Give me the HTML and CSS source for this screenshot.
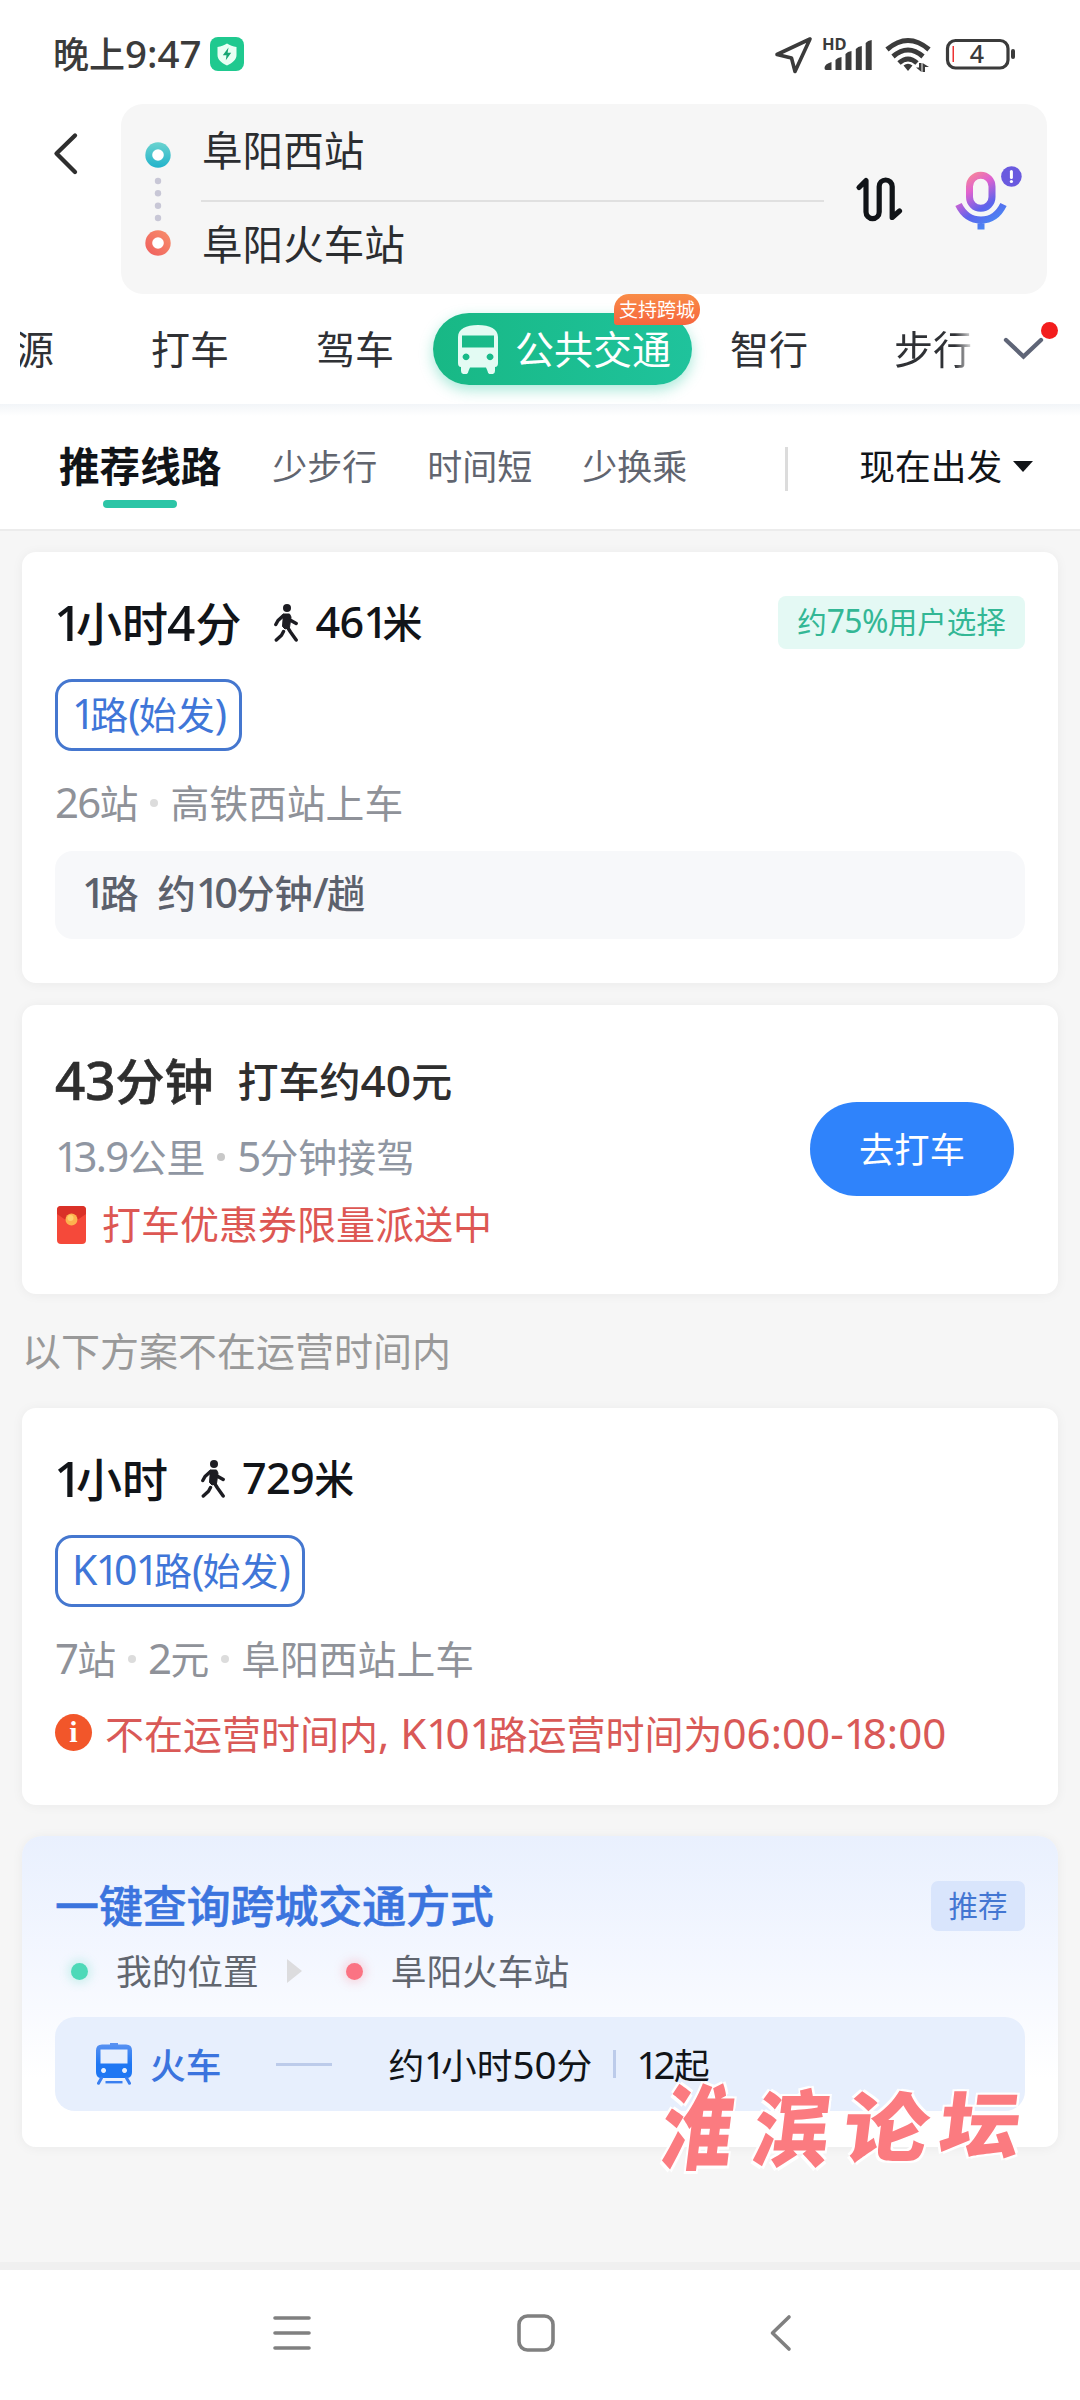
FILE: index.html
```html
<!DOCTYPE html>
<html lang="zh-CN">
<head>
<meta charset="utf-8">
<title>公共交通路线</title>
<link rel="stylesheet" href="styles.css">
</head>
<body>
<svg class="defs" width="0" height="0">
  <defs>
    <symbol id="walker" viewBox="0 0 24 38">
      <circle cx="13" cy="4" r="4"/>
      <path d="M9 10h6.500l1.500 3-1.500 10.500-4.500 1.500-2.500-2.500.5-6.500z" stroke="currentColor" stroke-width="1" stroke-linejoin="round"/>
      <path d="M9.500 11.500 4 16.500 1.800 20.500M16.500 16.200l5.700 3.300M13 22.500l3.500 5.500 5.700 8M9.500 27.500 7.500 31.200 2.300 36" fill="none" stroke="currentColor" stroke-width="3.400" stroke-linecap="round" stroke-linejoin="round"/>
    </symbol>
  </defs>
</svg>
<div class="screen">
  <header class="top">
    <div class="status">
      <span class="clock">晚上<span class="n">9:47</span></span>
      <svg class="shield" width="34" height="34" viewBox="0 0 34 34"><rect width="34" height="34" rx="8" fill="#1fc98f"/><path d="M17 6.500c3 2 6 3 9.500 3.500v8c0 4.500-4 8-9.500 10.500C11.500 26 7.500 22.500 7.500 18v-8c3.500-.5 6.500-1.500 9.500-3.500z" fill="#e9fff4"/><path d="M18.500 10.500 12.800 18.200h3.700l-.7 5 5.400-7.400h-3.600z" fill="#17a673"/></svg>
      <svg class="status-icons" width="244" height="60" viewBox="773 25 244 60">
        <g fill="none" stroke="#3b3b3b" stroke-width="3.600" stroke-linejoin="round">
          <path d="M810 39 777 54.500 791.500 58 795 71.500z"/>
          <rect x="947.500" y="40.500" width="60.500" height="27.500" rx="8" stroke-width="3.200"/>
          <path d="M887 49.500Q908 31.500 929 49.500M893 56.500Q908 43.500 923 56.500M899 63Q908 55 917 63" stroke-width="5" stroke-linejoin="miter"/>
        </g>
        <g fill="#3b3b3b">
          <path d="M824.500 68q0-4 7-6v8h-5.500q-1.500 0-1.500-2zM835.500 60q2-2.500 6-3v13h-6zM845.500 54q2-2.500 6-3v19h-6zM855.800 49q2-2.500 6-3v24h-6zM865.700 43q2-2.500 6-3v30h-6z"/>
          <path d="M903.500 65.500q4.500-3.500 9 0l-4.500 5.500z"/>
          <path d="M919 63h2.500v9l-5.500-4.500h3zM925 72h-2.500v-9l6.500 4h-4z"/>
          <rect x="1011" y="49" width="4" height="10" rx="2"/>
        </g>
        <rect x="952.500" y="46" width="1.500" height="16" fill="#e33"/>
        <text x="822" y="50" class="hd">HD</text>
        <text x="977" y="63" class="level">4</text>
      </svg>
    </div>
    <div class="search">
      <svg class="back" width="30" height="48" viewBox="50 130 30 48"><path d="M76 135.500 57.500 153.500 76 172" fill="none" stroke="#2e2e2e" stroke-width="4.300" stroke-linecap="round" stroke-linejoin="round"/></svg>
      <div class="endpoints">
        <svg class="track" width="30" height="120" viewBox="143.500 140 30 120">
          <defs><linearGradient id="cy" x1="0" y1="0" x2="0" y2="1"><stop offset="0" stop-color="#6bd3cf"/><stop offset="1" stop-color="#22b3cb"/></linearGradient><linearGradient id="rd" x1="1" y1="0" x2="0" y2="1"><stop offset="0" stop-color="#f8906c"/><stop offset="1" stop-color="#ef5d5d"/></linearGradient></defs>
          <circle cx="158.500" cy="155" r="12.700" fill="url(#cy)"/><circle cx="158.500" cy="155" r="5.800" fill="#fff"/>
          <g fill="#c8c7d6"><circle cx="158.500" cy="181" r="3.200"/><circle cx="158.500" cy="193.300" r="3.200"/><circle cx="158.500" cy="205.700" r="3.200"/><circle cx="158.500" cy="218" r="3.200"/></g>
          <circle cx="158.500" cy="243" r="12.700" fill="url(#rd)"/><circle cx="158.500" cy="243" r="5.800" fill="#fff"/>
        </svg>
        <div class="places">
          <div class="place">阜阳西站</div>
          <div class="place">阜阳火车站</div>
        </div>
        <svg class="swap" width="50" height="50" viewBox="855 174 50 50"><path d="M859 187.500 866 180.500V212a6.600 6.600 0 0 0 13.200 0V186.500a6.500 6.500 0 0 1 13 0V217.500L899.500 211" fill="none" stroke="#111418" stroke-width="5.200" stroke-linecap="round" stroke-linejoin="round"/></svg>
        <svg class="mic" width="68" height="68" viewBox="955 164 68 68">
          <defs><linearGradient id="mg" gradientUnits="userSpaceOnUse" x1="962" y1="172" x2="994" y2="222"><stop offset="0" stop-color="#ff9483"/><stop offset=".35" stop-color="#e062cf"/><stop offset=".7" stop-color="#5d63ec"/><stop offset="1" stop-color="#4a86f3"/></linearGradient></defs>
          <g fill="none" stroke="url(#mg)" stroke-width="7"><rect x="969.500" y="175.200" width="22.500" height="33" rx="11.200"/><path d="M958.500 204.500Q966 220 981 220T1003.500 204.500M981 220v9.500"/></g>
          <circle cx="1011.400" cy="176.500" r="10.300" fill="#6a5adf"/><path d="M1011.400 171.500v6" stroke="#fff" stroke-width="3" stroke-linecap="round"/><circle cx="1011.400" cy="181.500" r="1.600" fill="#fff"/>
        </svg>
      </div>
    </div>
    <nav class="modes">
      <div class="modes-strip">
        <span class="mode cut">源</span>
        <span class="mode taxi">打车</span>
        <span class="mode drive">驾车</span>
        <span class="mode active">
          <svg width="40" height="49" viewBox="0 0 40 49"><path fill="#e3fbf3" fill-rule="evenodd" d="M0 12C0 4 8 0 20 0s20 4 20 12v26q0 4-3 4v3a3.500 3.500 0 0 1-7.500 1L28 42.500H12L10.500 46A3.500 3.500 0 0 1 3 45v-3q-3 0-3-4zM4 10.500V22.500H36V10.500zM8 28.500a3.400 3.400 0 1 0 .1 0zM32 28.500a3.400 3.400 0 1 0 .1 0z"/></svg>
          <span class="active-t">公共交通</span>
          <span class="flag">支持跨城</span>
        </span>
        <span class="mode smart">智行</span>
        <span class="mode walk">步行</span>
      </div>
      <div class="more"><svg width="42" height="26" viewBox="0 0 42 26"><path d="M3 4 20.500 20.500 38 4" fill="none" stroke="#5f6577" stroke-width="4.300" stroke-linecap="round"/></svg><i class="reddot"></i></div>
    </nav>
  </header>
  <div class="filters">
    <span class="filter on">推荐线路</span>
    <span class="filter f1">少步行</span>
    <span class="filter f2">时间短</span>
    <span class="filter f3">少换乘</span>
    <i class="split"></i>
    <span class="depart">现在出发</span>
    <i class="caret"></i>
  </div>

  <main class="list">
    <section class="card c1">
      <div class="head">
        <h2 class="title"><span class="n"><span class="one">1</span></span>小时<span class="n">4</span>分</h2>
        <svg class="man" width="24" height="38"><use href="#walker"/></svg>
        <span class="dist"><span class="n">46<span class="one">1</span></span>米</span>
        <span class="share">约<span class="n">75%</span>用户选择</span>
      </div>
      <div class="line-tag"><span class="n"><span class="one">1</span></span>路<span class="n">(</span>始发<span class="n">)</span></div>
      <div class="meta"><span><span class="n">26</span>站</span><i class="dot"></i><span>高铁西站上车</span></div>
      <div class="freq"><span><span class="n"><span class="one">1</span></span>路</span><span class="freq-t">约<span class="n"><span class="one">1</span>0</span>分钟<span class="n">/</span>趟</span></div>
    </section>

    <section class="card c2">
      <div class="ride">
        <div class="ride-head"><h2 class="title"><span class="n">43</span>分钟</h2><span class="fare">打车约<span class="n">40</span>元</span></div>
        <div class="meta cool"><span><span class="n"><span class="one">1</span>3.9</span>公里</span><i class="dot dark"></i><span><span class="n">5</span>分钟接驾</span></div>
        <div class="coupon">
          <svg class="envelope" width="29" height="38" viewBox="0 0 29 38"><rect width="29" height="38" rx="4" fill="#f5493a"/><path d="M0 4q0-4 4-4h21q4 0 4 4v4L14.500 18 0 8z" fill="#da3128"/><circle cx="14.500" cy="13.500" r="6" fill="#fdb24e"/><circle cx="13.500" cy="12" r="3" fill="#fed06e"/></svg>
          <span>打车优惠券限量派送中</span>
        </div>
      </div>
      <button class="go">去打车</button>
    </section>

    <p class="notice">以下方案不在运营时间内</p>

    <section class="card c3">
      <div class="head">
        <h2 class="title"><span class="n"><span class="one">1</span></span>小时</h2>
        <svg class="man" width="24" height="38"><use href="#walker"/></svg>
        <span class="dist"><span class="n">729</span>米</span>
      </div>
      <div class="line-tag"><span class="n">K<span class="one">1</span>0<span class="one">1</span></span>路<span class="n">(</span>始发<span class="n">)</span></div>
      <div class="meta"><span><span class="n">7</span>站</span><i class="dot"></i><span><span class="n">2</span>元</span><i class="dot"></i><span>阜阳西站上车</span></div>
      <div class="warn"><i class="info">i</i><span>不在运营时间内<span class="n">, K<span class="one">1</span>0<span class="one">1</span></span>路运营时间为<span class="n">06:00-<span class="one">1</span>8:00</span></span></div>
    </section>

    <section class="card c4">
      <div class="cross-head"><h2 class="cross-title">一键查询跨城交通方式</h2><span class="rec">推荐</span></div>
      <div class="trip"><i class="pt green"></i><span class="from">我的位置</span><i class="arrow"></i><i class="pt red"></i><span class="to">阜阳火车站</span></div>
      <div class="train">
        <svg width="36" height="42" viewBox="0 0 36 42"><defs><linearGradient id="tg" x1="0" y1="0" x2="0" y2="1"><stop offset="0" stop-color="#5b93f2"/><stop offset=".6" stop-color="#1f77f3"/></linearGradient></defs><path fill="url(#tg)" fill-rule="evenodd" d="M14 0h8v1.500h8q6 0 6 6V29q0 5-4 6H4q-4-1-4-6V7.500q0-6 6-6h8zM4.500 6.500v14h27v-14zM7.500 25a2.500 2.500 0 1 0 .1 0zM28.500 25a2.500 2.500 0 1 0 .1 0z"/><path d="M5.500 35 2.500 40.300M30.500 35l3 5.300" stroke="#3a7ff0" stroke-width="3" stroke-linecap="round"/><path d="M9.500 39.200h17" stroke="#3a7ff0" stroke-width="2.400"/></svg>
        <span class="kind">火车</span><i class="dash"></i>
        <span class="dur">约<span class="n"><span class="one">1</span></span>小时<span class="n">50</span>分</span><i class="bar"></i>
        <span class="price"><span class="n"><span class="one">1</span>2</span>起</span>
      </div>
      <div class="forum"><span class="w1">淮</span><span class="w2">滨</span><span class="w3">论</span><span class="w4">坛</span></div>
    </section>
  </main>

  <footer class="sysnav">
    <svg class="menu" width="40" height="38" viewBox="0 0 40 38"><path d="M3 4h34M3 19h34M3 34h34" stroke="#808080" stroke-width="3.600" stroke-linecap="round"/></svg>
    <svg class="home" width="40" height="40" viewBox="0 0 40 40"><rect x="3" y="3" width="34" height="34" rx="8.500" fill="none" stroke="#808080" stroke-width="3.600"/></svg>
    <svg class="prev" width="24" height="38" viewBox="0 0 24 38"><path d="M20 3 3.500 19 20 35" fill="none" stroke="#808080" stroke-width="3.600" stroke-linecap="round" stroke-linejoin="round"/></svg>
  </footer>
</div>
</body>
</html>
```
FILE: styles.css
```css
* { box-sizing: border-box; margin: 0; padding: 0; }
body { width: 1080px; background: #f6f6f6; font-family: "Noto Sans CJK SC", sans-serif; color: #111418; }
i { font-style: normal; }
svg { display: block; flex: none; }
h2 { font-weight: 500; }
.defs { position: absolute; }
.screen { width: 1080px; height: 2400px; overflow: hidden; display: flex; flex-direction: column; background: #f6f6f6; }

/* Latin digits run a little larger than the ideographs beside them */
.n { font-family: "Noto Sans", sans-serif; font-size: 1.08em; line-height: 1; }
.one { letter-spacing: -.13em; }

.top { height: 404px; background: #fff; }
.status { height: 104px; display: flex; align-items: flex-start; padding: 0 63px 0 53px; }
.clock { font-size: 36px; font-weight: 500; line-height: 40px; margin-top: 32px; color: #3b3b3b; width: 157px; white-space: nowrap; }
.clock .n { font-size: 38.5px; }
.shield { margin-top: 37px; }
.status-icons { margin: 25px 0 0 auto; }
.hd { font: 700 16.5px "Noto Sans", sans-serif; fill: #3b3b3b; }
.level { font: 500 25px "Noto Sans", sans-serif; fill: #3b3b3b; text-anchor: middle; }

.search { display: flex; align-items: flex-start; padding-left: 49px; }
.back { margin-top: 26px; }
.endpoints { margin-left: 42px; width: 926px; height: 190px; border-radius: 22px; background: #f6f6f6; display: flex; align-items: flex-start; }
.track { margin: 36px 0 0 22px; }
.places { width: 623px; margin-left: 28px; }
.place { height: 96px; padding-left: 1px; font-size: 40.6px; line-height: 89px; color: #2b2d30; }
.place + .place { border-top: 2px solid #e0e0e0; height: 93px; line-height: 81px; }
.swap { margin: 70px 0 0 31px; }
.mic { margin: 60px 0 0 50px; }

.modes { height: 110px; display: flex; padding-left: 20px; }
.modes-strip { display: flex; align-items: center; width: 953px; height: 110px; }
.mode { font-size: 39px; line-height: 72px; color: #2f3135; white-space: nowrap; flex: none; margin-top: -5px; }
.cut { width: 34px; overflow: hidden; direction: rtl; }
.taxi { margin-left: 97px; }
.drive { margin-left: 87px; }
.active { position: relative; margin: 0 0 0 39px; width: 259px; height: 72px; border-radius: 36px; background: linear-gradient(90deg, #18b885, #1fc39c); color: #fff; display: flex; align-items: center; padding-left: 25px; gap: 17px; box-shadow: 0 5px 14px rgba(40, 200, 160, .4); }
.active-t { margin-top: -5px; }
.flag { position: absolute; left: 181px; top: -19px; width: 86px; height: 31px; border-radius: 15px 15px 15px 3px; background: linear-gradient(#f98c47, #f6653e); font-size: 19px; line-height: 29px; text-align: center; }
.smart { margin-left: 38px; }
.walk { margin-left: 86px; background: linear-gradient(90deg, #2f3135 78%, #fff 104%); -webkit-background-clip: text; background-clip: text; color: transparent; }
.more { position: relative; margin: 42px 0 0 30px; }
.reddot { position: absolute; left: 38px; top: -14px; width: 17px; height: 17px; border-radius: 50%; background: #f31d1d; }

.filters { height: 127px; padding-left: 59px; display: flex; align-items: flex-start; background: linear-gradient(#f2f5f8, #fff 12px); border-bottom: 2px solid #ececec; white-space: nowrap; }
.filter { font-size: 35px; line-height: 40px; margin-top: 41px; color: #61656f; }
.on { position: relative; font-size: 40.6px; font-weight: 700; color: #111418; }
.on::after { content: ""; position: absolute; left: 44px; top: 55px; width: 74px; height: 8px; border-radius: 4px; background: #2cc5a6; }
.f1 { margin-left: 51px; }
.f2 { margin-left: 50px; }
.f3 { margin-left: 50px; }
.split { width: 3px; height: 44px; margin: 43px 0 0 98px; background: #dcdcdc; }
.depart { margin: 41px 0 0 71px; font-size: 35.7px; line-height: 40px; }
.caret { margin: 57px 0 0 11px; border: 10px solid transparent; border-top: 11px solid #111418; border-bottom: 0; }

.list { flex: 1; padding: 21px 22px 0; }
.card { border-radius: 14px; background: #fff; box-shadow: 0 1px 12px rgba(0, 0, 0, .05); padding-left: 33px; padding-right: 33px; white-space: nowrap; }
.head { display: flex; align-items: center; height: 54px; }
.title { font-size: 46px; line-height: 54px; margin-top: -9px; }
.head .title .n { margin-left: -1px; }
.dist { font-size: 40px; font-weight: 500; line-height: 54px; margin-top: -8px; margin-left: 17px; }
.dist .n { letter-spacing: -.015em; }
.man { margin-left: 33px; margin-top: -5px; color: #1c1c22; fill: currentColor; }
.share { margin-left: auto; width: 247px; height: 53px; border-radius: 8px; background: #e4f9f4; color: #33b795; font-size: 29.5px; line-height: 49px; text-align: center; margin-top: -5px; }
.share .n { letter-spacing: -.02em; }
.line-tag { width: max-content; height: 72px; border: 3px solid #4577cf; border-radius: 17px; color: #3f76d8; font-size: 38px; line-height: 62px; padding: 0 13px 0 14px; }
.line-tag .n, .meta .n, .freq .n { letter-spacing: -.04em; }
.line-tag .one, .meta .one, .freq .one { letter-spacing: -.13em; }
.meta { display: flex; align-items: center; font-size: 38.8px; line-height: 50px; height: 50px; color: #8f9299; }
.cool { color: #8f96a2; }
.dot { width: 8px; height: 8px; border-radius: 50%; background: #dcdcdc; margin: 4px 12px 0 12px; }
.dark { background: #c8c8c8; }

.c1 { height: 431px; padding-top: 46px; }
.line-tag { margin-top: 27px; }
.c1 .meta, .c3 .meta { margin-top: 25px; }
.freq { margin-top: 25px; height: 88px; border-radius: 18px; background: #f7f8fa; padding-left: 27px; display: flex; gap: 19px; font-size: 38.3px; font-weight: 500; line-height: 82px; color: #5c616c; }

.c2 { height: 289px; margin-top: 22px; display: flex; justify-content: space-between; align-items: flex-start; padding-right: 44px; }
.c2 .title { font-size: 49px; color: #2e2e2e; margin: 0; -webkit-text-stroke: .6px #2e2e2e; }
.ride { padding-top: 47px; }
.ride-head { display: flex; height: 54px; align-items: center; color: #2e2e2e; }
.fare { font-size: 41px; font-weight: 500; line-height: 54px; margin-left: 24px; }
.c2 .meta { margin-top: 24px; }
.coupon { display: flex; align-items: center; gap: 17px; padding-left: 2px; margin-top: 17px; font-size: 39px; line-height: 46px; height: 50px; color: #dd5753; }
.coupon span { margin-left: -1px; }
.envelope { margin-top: 5px; }
.go { margin-top: 97px; width: 204px; height: 94px; border: 0; border-radius: 47px; background: #2f83fb; color: #fff; font: 400 35.3px/90px "Noto Sans CJK SC", sans-serif; padding-bottom: 3px; }

.notice { margin: 25px 0 26px 0; height: 63px; font-size: 39px; line-height: 61px; color: #999; }

.c3 { height: 397px; padding-top: 46px; }
.warn { display: flex; align-items: center; margin-top: 25px; height: 50px; font-size: 39px; line-height: 46px; color: #d95957; }
.warn .one { letter-spacing: -.12em; }
.info { width: 37px; height: 37px; border-radius: 50%; background: #f2562a; color: #fff; font: 700 30px/35px "Liberation Serif", serif; text-align: center; margin-right: 13px; flex: none; }

.c4 { position: relative; margin-top: 31px; height: 311px; border-radius: 20px 20px 14px 14px; background: linear-gradient(#e9f0fe, #f5f8ff 45%, #fff 78%); padding-top: 45px; }
.cross-head { display: flex; justify-content: space-between; height: 50px; }
.cross-title { font-size: 43.9px; line-height: 46px; font-weight: 500; color: #3b74de; -webkit-text-stroke: .6px #3b74de; }
.rec { width: 94px; height: 50px; border-radius: 7px; background: #d9e5fc; color: #4376d2; font-size: 29.5px; line-height: 46px; text-align: center; }
.trip { display: flex; align-items: center; height: 50px; margin-top: 15px; font-size: 35.7px; line-height: 44px; color: #61666f; }
.pt { width: 17px; height: 17px; border-radius: 50%; }
.green { margin-left: 16px; background: #4ed9b8; box-shadow: 0 0 10px 3px rgba(78, 217, 184, .25); }
.red { margin-left: 44px; background: #fb7383; box-shadow: 0 0 10px 3px rgba(251, 115, 131, .25); }
.from { margin-left: 28px; }
.to { margin-left: 28px; }
.trip span { margin-top: -2px; }
.arrow { margin-left: 28px; border: 12px solid transparent; border-left: 15px solid #dcdcde; border-right: 0; }
.train { margin-top: 21px; height: 94px; border-radius: 20px; background: #e7effd; display: flex; align-items: center; padding-left: 41px; font-size: 35.7px; line-height: 90px; }
.train span { margin-top: 0; }
.kind { margin-left: 18px; font-weight: 500; color: #3b74de; }
.dash { width: 56px; height: 3px; margin-left: 55px; background: #bccbea; }
.dur { margin-left: 56px; width: 203px; }
.bar { width: 3px; height: 28px; margin: 0 20px 0 22px; background: #bccbea; }
.price .n { letter-spacing: -.04em; }
.price .one { letter-spacing: -.13em; }
.forum { position: absolute; left: 639px; top: 241px; display: flex; font-size: 76px; line-height: 100px; font-weight: 800; color: #fb7b80; text-shadow: 2px 2px 0 #fff, -2px -2px 0 #fff, 2px -2px 0 #fff, -2px 2px 0 #fff; gap: 18px; }
.forum span { display: block; }
.w1 { transform: translateY(-5px) skewX(-7deg) scale(.93, 1.22); }
.w2 { transform: translateY(-3px) skewX(-7deg) scale(1, 1.1); }
.w3 { transform: translateY(-4px) skewX(-7deg) scale(1.12, 1); }
.w4 { transform: translateY(-6px) skewX(-7deg) scale(1.06, .95); }

.sysnav { height: 138px; background: #fff; border-top: 8px solid #f0f0f0; display: flex; align-items: center; padding-left: 272px; }
.home { margin-left: 204px; }
.prev { margin-left: 213px; }
.menu, .home, .prev { margin-top: -5px; }
```
